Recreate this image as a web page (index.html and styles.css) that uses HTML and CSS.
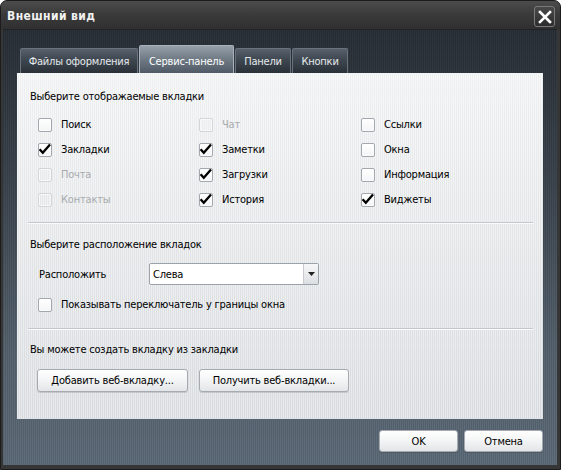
FILE: index.html
```html
<!DOCTYPE html>
<html lang="ru">
<head>
<meta charset="utf-8">
<title>Внешний вид</title>
<link rel="stylesheet" href="styles.css">
</head>
<body>
<div class="window">
  <div class="titlebar">
    <span class="title">Внешний вид</span>
    <span class="close">
      <svg width="14" height="14" viewBox="0 0 14 14"><path d="M2 2 L12 12 M12 2 L2 12" stroke="#fff" stroke-width="2.6" stroke-linecap="square"/></svg>
    </span>
  </div>
  <div class="client">
    <div class="tabs">
      <div class="tab t1">Файлы оформления</div>
      <div class="tab t2 active">Сервис-панель</div>
      <div class="tab t3">Панели</div>
      <div class="tab t4">Кнопки</div>
    </div>
    <div class="panel">
      <div class="section s1">
        <div class="heading">Выберите отображаемые вкладки</div>
        <div class="grid">
          <label class="check"><span class="box"></span>Поиск</label>
          <label class="check disabled"><span class="box"></span>Чат</label>
          <label class="check"><span class="box"></span>Ссылки</label>

          <label class="check"><span class="box"><svg width="13" height="13" viewBox="0 0 13 13"><path d="M1.6 6.2 L4.8 9.8 L12 1.4" fill="none" stroke="#000" stroke-width="2.3"/></svg></span>Закладки</label>
          <label class="check"><span class="box"><svg width="13" height="13" viewBox="0 0 13 13"><path d="M1.6 6.2 L4.8 9.8 L12 1.4" fill="none" stroke="#000" stroke-width="2.3"/></svg></span>Заметки</label>
          <label class="check"><span class="box"></span>Окна</label>

          <label class="check disabled"><span class="box"></span>Почта</label>
          <label class="check"><span class="box"><svg width="13" height="13" viewBox="0 0 13 13"><path d="M1.6 6.2 L4.8 9.8 L12 1.4" fill="none" stroke="#000" stroke-width="2.3"/></svg></span>Загрузки</label>
          <label class="check"><span class="box"></span>Информация</label>

          <label class="check disabled"><span class="box"></span>Контакты</label>
          <label class="check"><span class="box"><svg width="13" height="13" viewBox="0 0 13 13"><path d="M1.6 6.2 L4.8 9.8 L12 1.4" fill="none" stroke="#000" stroke-width="2.3"/></svg></span>История</label>
          <label class="check"><span class="box"><svg width="13" height="13" viewBox="0 0 13 13"><path d="M1.6 6.2 L4.8 9.8 L12 1.4" fill="none" stroke="#000" stroke-width="2.3"/></svg></span>Виджеты</label>
        </div>
      </div>
      <div class="section s2">
        <div class="heading">Выберите расположение вкладок</div>
        <div class="select-row">
          <span class="select-label">Расположить</span>
          <div class="select">
            <span class="select-value">Слева</span>
            <span class="select-arrow"><svg width="7" height="4" viewBox="0 0 7 4"><path d="M0 0 H7 L3.5 4 Z" fill="#222"/></svg></span>
          </div>
        </div>
        <label class="check single"><span class="box"></span>Показывать переключатель у границы окна</label>
      </div>
      <div class="section s3">
        <div class="heading">Вы можете создать вкладку из закладки</div>
        <div class="btn-row">
          <button class="btn wide1">Добавить веб-вкладку...</button>
          <button class="btn wide2">Получить веб-вкладки...</button>
        </div>
      </div>
    </div>
    <div class="footer">
      <button class="btn small">OK</button>
      <button class="btn small">Отмена</button>
    </div>
  </div>
</div>
</body>
</html>
```

FILE: styles.css
```css
* { box-sizing: border-box; }

html, body {
  margin: 0;
  padding: 0;
  background: #ffffff;
}

body {
  font-family: "DejaVu Sans Condensed", "Liberation Sans", sans-serif;
  font-size: 11px;
  letter-spacing: -0.2px;
  color: #000;
}

.window {
  width: 561px;
  height: 470px;
  background: #363636;
  border: 1px solid #1c1c1c;
  border-radius: 7px 7px 0 0;
  display: flex;
  flex-direction: column;
  overflow: hidden;
}

.titlebar {
  height: 28px;
  flex: none;
  display: flex;
  align-items: center;
  justify-content: space-between;
  padding: 0 5px 0 6px;
  background: linear-gradient(#4c4c4c, #3b3b3b 45%, #303030);
}

.title {
  color: #f2f2f2;
  font-family: "DejaVu Sans Condensed", "DejaVu Sans", sans-serif;
  font-weight: bold;
  font-size: 12px;
  letter-spacing: 0.4px;
  margin-top: 1px;
}

.close {
  width: 21px;
  height: 21px;
  margin-top: 3px;
  border: 1px solid #7a7a7a;
  border-radius: 3px;
  background: linear-gradient(#4a4a4a, #2c2c2c);
  display: flex;
  align-items: center;
  justify-content: center;
}

.client {
  flex: 1;
  margin: 0 3px 4px 2px;
  border-top: 1px solid #1f2328;
  background:
    repeating-linear-gradient(90deg, rgba(0,0,0,0.08) 0 1px, rgba(255,255,255,0.025) 1px 2px),
    linear-gradient(#282e35, #3a434d 35%, #55626e 75%, #5c6a78);
  padding: 15px 14px 0 14px;
  display: flex;
  flex-direction: column;
}

.tabs {
  display: flex;
  align-items: flex-end;
  gap: 1px;
  height: 28px;
  margin-left: 3px;
}

.tab {
  height: 25px;
  display: flex;
  align-items: center;
  justify-content: center;
  color: #e6e9ec;
  font-size: 11px;
  border: 1px solid #68727c;
  border-bottom: none;
  border-radius: 2px 2px 0 0;
  background: linear-gradient(#58616b, #3e4750 45%, #2a3038);
}

.t1 { width: 118px; }
.t2 { width: 95px; }
.t3 { width: 56px; }
.t4 { width: 56px; }

.tab.active {
  height: 28px;
  color: #ffffff;
  border-color: #a9b2bb;
  background: linear-gradient(#96a0aa, #727d88 45%, #4f5a66);
  padding-top: 3px;
}

.panel {
  height: 346px;
  flex: none;
  padding: 0 10px 0 11px;
  background:
    repeating-linear-gradient(90deg, rgba(255,255,255,0.35) 0 1px, rgba(0,0,0,0.015) 1px 2px),
    linear-gradient(#f3f4f5, #e6e8ea 50%, #dadee2);
}

.section {
  border-bottom: 1px solid #c3c7cb;
  box-shadow: 0 1px 0 #fafbfc;
}

.section.s3 {
  border-bottom: none;
  box-shadow: none;
}

.heading {
  line-height: 14px;
  height: 14px;
  padding-left: 2px;
  white-space: nowrap;
}

.s1 { padding: 17px 0 10px 0; }
.s2 { padding: 15px 0 11px 0; }
.s3 { padding: 14px 0 0 0; }

.grid {
  margin: 8px 0 0 10px;
  display: grid;
  grid-template-columns: 161px 162px 1fr;
  grid-auto-rows: 25px;
}

.check {
  display: flex;
  align-items: center;
  gap: 9px;
  white-space: nowrap;
  height: 25px;
}

.box {
  width: 14px;
  height: 14px;
  flex: none;
  border: 1px solid #a3a8ae;
  border-radius: 2px;
  background: linear-gradient(#ffffff, #f4f5f6);
  position: relative;
  box-shadow: inset 0 0 0 1px rgba(255,255,255,0.6);
}

.box svg {
  position: absolute;
  left: -1px;
  top: -1px;
}

.check.disabled {
  color: #a8abae;
}

.check.disabled .box {
  border-color: #d3d6d9;
  background: transparent;
}

.select-row {
  margin: 11px 0 0 10px;
  display: flex;
  align-items: center;
  height: 22px;
}

.select-label {
  width: 111px;
  padding-left: 1px;
}

.select {
  width: 170px;
  height: 22px;
  border: 1px solid #9ba2a9;
  border-radius: 2px;
  background: #ffffff;
  display: flex;
  align-items: stretch;
}

.select-value {
  flex: 1;
  display: flex;
  align-items: center;
  padding-left: 3px;
}

.select-arrow {
  width: 15px;
  border-left: 1px solid #c8ccd0;
  background: linear-gradient(#f6f7f8, #dcdfe2);
  display: flex;
  align-items: center;
  justify-content: center;
}

.check.single {
  margin: 7px 0 0 10px;
}

.btn-row {
  margin: 12px 0 0 9px;
  display: flex;
  gap: 11px;
}

.btn {
  font-family: inherit;
  font-size: 11px;
  letter-spacing: -0.2px;
  color: #000;
  height: 23px;
  padding: 0;
  border: 1px solid #a6abb1;
  border-radius: 3px;
  background: linear-gradient(#ffffff, #f3f4f5 50%, #e3e5e8);
  box-shadow: 0 1px 0 rgba(0,0,0,0.12);
}

.wide1 { width: 151px; }
.wide2 { width: 150px; }
.small { width: 79px; height: 22px; }

.footer {
  margin-top: 11px;
  display: flex;
  justify-content: flex-end;
  gap: 6px;
}
```
